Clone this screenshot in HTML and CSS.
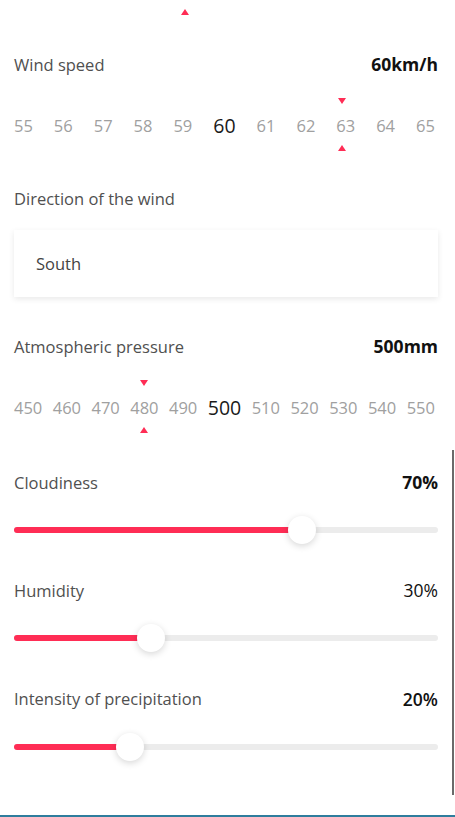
FILE: index.html
```html
<!DOCTYPE html>
<html lang="en">
<head>
<meta charset="utf-8">
<title>Weather settings</title>
<link rel="stylesheet" href="styles.css">
</head>
<body>
<div class="page">
  <div class="top-marker"><span class="tri up"></span></div>

  <div class="row hdr-wind">
    <span class="label">Wind speed</span>
    <span class="value bold">60km/h</span>
  </div>
  <div class="ruler">
    <span class="tri down marker-wind"></span>
    <div class="nums">
      <span>55</span><span>56</span><span>57</span><span>58</span><span>59</span><span class="active">60</span><span>61</span><span>62</span><span>63</span><span>64</span><span>65</span>
    </div>
    <span class="tri up marker-wind"></span>
  </div>

  <div class="row hdr-dir"><span class="label">Direction of the wind</span></div>
  <div class="select-box">South</div>

  <div class="row hdr-press">
    <span class="label">Atmospheric pressure</span>
    <span class="value bold">500mm</span>
  </div>
  <div class="ruler">
    <span class="tri down marker-press"></span>
    <div class="nums">
      <span>450</span><span>460</span><span>470</span><span>480</span><span>490</span><span class="active">500</span><span>510</span><span>520</span><span>530</span><span>540</span><span>550</span>
    </div>
    <span class="tri up marker-press"></span>
  </div>

  <div class="row hdr-cloud">
    <span class="label">Cloudiness</span>
    <span class="value bold">70%</span>
  </div>
  <div class="slider"><div class="track"><div class="fill" style="width:68%"><span class="thumb"></span></div></div></div>

  <div class="row hdr-next">
    <span class="label">Humidity</span>
    <span class="value">30%</span>
  </div>
  <div class="slider"><div class="track"><div class="fill" style="width:32.2%"><span class="thumb"></span></div></div></div>

  <div class="row hdr-next">
    <span class="label">Intensity of precipitation</span>
    <span class="value semi">20%</span>
  </div>
  <div class="slider"><div class="track"><div class="fill" style="width:27.4%"><span class="thumb"></span></div></div></div>

  <div class="scrollbar"></div>
</div>
</body>
</html>
```

FILE: styles.css
```css
* { box-sizing: border-box; }
html, body { margin: 0; padding: 0; background: #fff; }
body {
  font-family: "Open Sans", "Noto Sans", Arial, sans-serif;
  color: #555;
  width: 455px;
  height: 817px;
  overflow: hidden;
}
.page {
  position: relative;
  height: 817px;
  padding: 9px 17px 0 14px;
  border-bottom: 2px solid #2f7d9d;
  display: flex;
  flex-direction: column;
}
.top-marker {
  height: 6px;
  display: flex;
  padding-left: 167px;
}
.tri {
  display: block;
  width: 0;
  height: 0;
  border-left: 4px solid transparent;
  border-right: 4px solid transparent;
}
.tri.up { border-bottom: 6px solid #ff2d55; }
.tri.down { border-top: 6px solid #ff2d55; }

.row {
  display: flex;
  justify-content: space-between;
  align-items: center;
  height: 24px;
  padding-bottom: 2px;
  font-size: 16.5px;
}
.label { color: #505050; }
.value { color: #111; font-size: 17.5px; }
.value.bold { font-weight: 700; }
.value.semi { font-weight: 600; }

.hdr-wind { margin-top: 38px; }
.hdr-dir { margin-top: 36px; }
.hdr-press { margin-top: 38px; }
.hdr-cloud { margin-top: 38px; }
.hdr-next { margin-top: 35.5px; }

.ruler {
  margin-top: 21px;
  display: flex;
  flex-direction: column;
}
.ruler .tri.down { margin-bottom: 10px; }
.ruler .tri.up { margin-top: 7px; }
.marker-wind { margin-left: 324px; }
.marker-press { margin-left: 126px; }
.nums {
  height: 24px;
  display: flex;
  justify-content: space-between;
  align-items: center;
  padding-bottom: 2px;
  font-size: 16.5px;
  color: #a0a0a0;
  padding-right: 3px;
}
.nums .active {
  color: #1a1a1a;
  font-size: 19.5px;
}

.select-box {
  margin-top: 19px;
  height: 67px;
  display: flex;
  align-items: center;
  padding-left: 22px;
  padding-bottom: 1px;
  font-size: 16.5px;
  color: #444;
  background: #fff;
  box-shadow: 0 2px 6px rgba(0, 0, 0, 0.09);
}

.slider {
  margin-top: 20.5px;
  height: 28px;
  display: flex;
  align-items: center;
}
.hdr-next + .slider { margin-top: 21px; }
.track {
  width: 100%;
  height: 6px;
  border-radius: 3px;
  background: #ececec;
  display: flex;
}
.fill {
  position: relative;
  height: 6px;
  border-radius: 3px;
  background: #ff2d55;
}
.thumb {
  position: absolute;
  right: -14px;
  top: -11px;
  width: 28px;
  height: 28px;
  border-radius: 50%;
  background: #fff;
  box-shadow: 0 2px 7px rgba(0, 0, 0, 0.16);
}
.scrollbar {
  position: absolute;
  left: 452px;
  top: 450px;
  width: 2px;
  height: 345px;
  background: #6a6a6a;
}
```
